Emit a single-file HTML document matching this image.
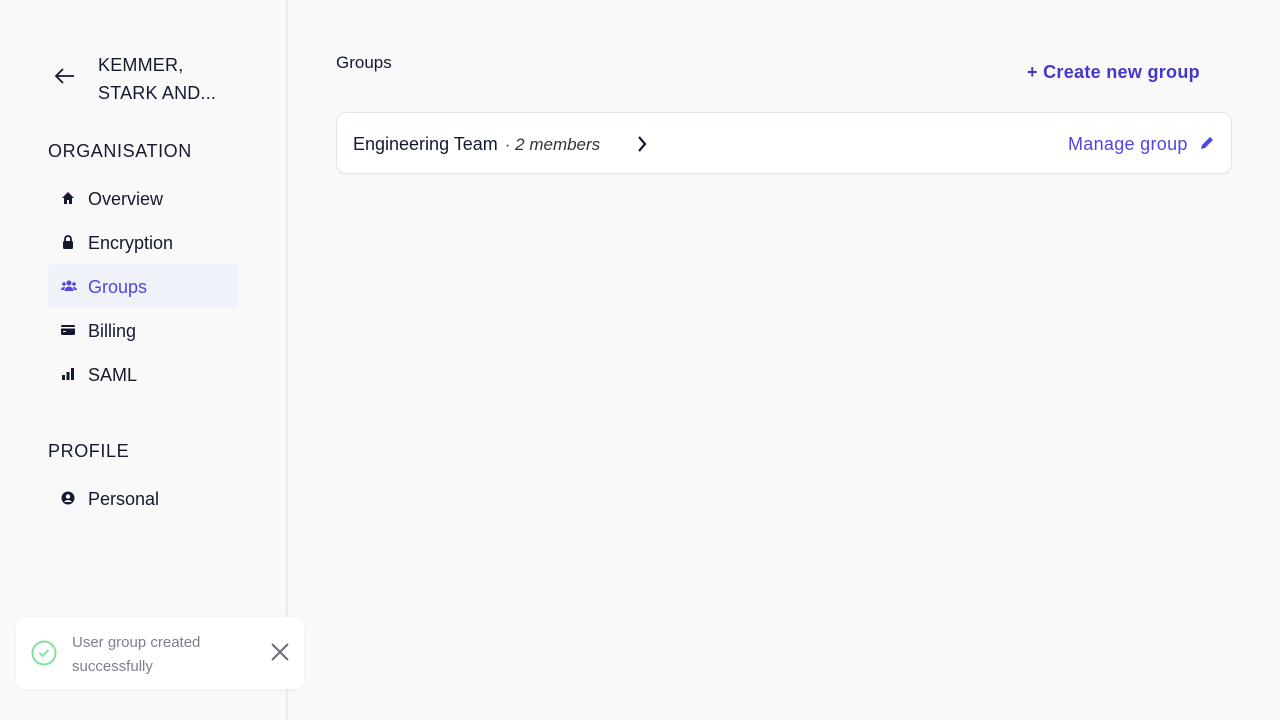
<!DOCTYPE html>
<html><head><meta charset="utf-8"><style>
*{box-sizing:border-box;margin:0;padding:0}
body{width:1280px;height:720px;overflow:hidden;background:#f9f9f9;font-family:"Liberation Sans",sans-serif;color:#141a2e;position:relative}
.side{position:absolute;left:0;top:0;width:287px;height:720px;background:#f9f9f9;border-right:1px solid #e3e4ea;box-shadow:1px 0 3px rgba(0,0,0,0.05)}
.org{position:absolute;left:98px;top:51px;font-size:18px;line-height:28px;letter-spacing:0.2px}
.back{position:absolute;left:53px;top:64px}
.h{position:absolute;left:48px;font-size:18px;letter-spacing:0.6px}
.item{position:absolute;left:48px;width:191px;height:44px;border-radius:6px;font-size:18px;display:flex;align-items:center;padding-left:40px;padding-top:2px}
.item svg{position:absolute;left:13px;top:15px}
.act{background:#eff2f8;color:#4f46e5}
.main{position:absolute;left:336px}
.card{position:absolute;left:336px;top:112px;width:896px;height:62px;background:#fff;border:1px solid #e2e5ee;border-radius:10px}
.toast{position:absolute;left:16px;top:617px;width:288px;height:72px;background:#fff;border-radius:8px;box-shadow:0 1px 4px rgba(0,0,0,0.05)}
</style></head><body>
<div class="side">
<svg class="back" width="24" height="24" viewBox="0 0 24 24" fill="none" stroke="#141a2e" stroke-width="1.8"><path d="M21 12H3M10 5l-7 7 7 7"/></svg>
<div class="org">KEMMER,<br>STARK AND...</div>
<div class="h" style="top:141px">ORGANISATION</div>
<div class="item" style="top:176px"><svg width="14" height="14" viewBox="0 0 14 14"><path d="M7 1L1 7h2v6h3v-4h2v4h3V7h2z" fill="#141a2e"/></svg>Overview</div>
<div class="item" style="top:220px"><svg width="14" height="14" viewBox="0 0 14 14"><path d="M4 6V4a3 3 0 016 0v2" stroke="#141a2e" stroke-width="1.8" fill="none"/><rect x="2" y="6" width="10" height="8" rx="1.5" fill="#141a2e"/></svg>Encryption</div>
<div class="item act" style="top:264px"><svg width="16" height="14" viewBox="0 0 16 14" fill="#4f46e5"><circle cx="8" cy="4" r="2.5"/><circle cx="3" cy="5" r="1.8"/><circle cx="13" cy="5" r="1.8"/><path d="M3.5 12a4.5 4.5 0 019 0z"/><path d="M0 11a3 3 0 013-3h1l-1 3z"/><path d="M16 11a3 3 0 00-3-3h-1l1 3z"/></svg>Groups</div>
<div class="item" style="top:308px"><svg width="14" height="14" viewBox="0 0 14 14"><rect x="0" y="2" width="14" height="10" rx="1.5" fill="#141a2e"/><rect x="0" y="4" width="14" height="1.5" fill="#fff"/><rect x="2" y="8" width="3" height="1" fill="#fff"/></svg>Billing</div>
<div class="item" style="top:352px"><svg width="14" height="14" viewBox="0 0 14 14" fill="#141a2e"><rect x="1" y="8" width="3" height="5"/><rect x="5.5" y="5" width="3" height="8"/><rect x="10" y="1" width="3" height="12"/></svg>SAML</div>
<div class="h" style="top:441px">PROFILE</div>
<div class="item" style="top:476px"><svg width="14" height="14" viewBox="0 0 14 14"><circle cx="7" cy="7" r="6.5" fill="#141a2e"/><circle cx="7" cy="5.5" r="2.2" fill="#fff"/><path d="M3 11a4.5 3.5 0 018 0z" fill="#fff"/></svg>Personal</div>
</div>
<div class="main" style="top:53px;font-size:17px">Groups</div>
<div style="position:absolute;left:1027px;top:62px;font-size:18px;font-weight:bold;color:#4338ca;letter-spacing:0.3px">+ Create new group</div>
<div class="card">
<div style="position:absolute;left:16px;top:21px;font-size:18px">Engineering Team <span style="font-style:italic;color:#333;font-size:17px;margin-left:2px">· 2 members</span></div>
<svg style="position:absolute;left:297px;top:22px" width="16" height="18" viewBox="0 0 16 18" fill="none" stroke="#141a2e" stroke-width="2.2"><path d="M5 2l6 7-6 7"/></svg>
<div style="position:absolute;left:731px;top:21px;font-size:18px;color:#4f46e5;letter-spacing:0.3px">Manage group</div>
<svg style="position:absolute;left:862px;top:22px" width="16" height="16" viewBox="0 0 16 16"><path d="M2 14l1-4 8-8 3 3-8 8z" fill="#4f46e5"/></svg>
</div>
<div class="toast">
<svg style="position:absolute;left:15px;top:23px" width="26" height="26" viewBox="0 0 26 26" fill="none" stroke="#86e0a0" stroke-width="2"><circle cx="13" cy="13" r="11.5"/><path d="M8.5 13l3 3 6-6"/></svg>
<div style="position:absolute;left:56px;top:14px;font-size:15px;line-height:24px;color:#7d7f8a">User group created<br>successfully</div>
<svg style="position:absolute;left:254px;top:25px" width="20" height="20" viewBox="0 0 20 20" stroke="#6b6d78" stroke-width="2"><path d="M2 2l16 16M18 2L2 18"/></svg>
</div>
</body></html>
